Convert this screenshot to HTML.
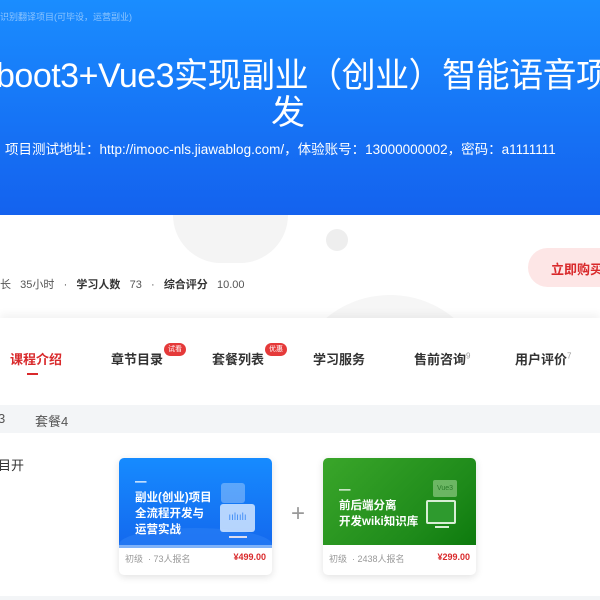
<!DOCTYPE html>
<html><head><meta charset="utf-8"><style>
*{margin:0;padding:0;box-sizing:border-box}
body{width:600px;height:600px;overflow:hidden;position:relative;background:#fff;font-family:"Liberation Sans","Noto Sans CJK SC",sans-serif}
.a{position:absolute;white-space:nowrap}
.hdr{position:absolute;left:0;top:0;width:600px;height:215px;background:linear-gradient(180deg,#1a8dff 0%,#1672f5 60%,#1462ee 100%)}
.card{position:absolute;width:153px;height:117px;border-radius:5px;background:#fff;box-shadow:0 2px 8px rgba(0,0,0,.12);overflow:hidden}
.img{position:absolute;left:0;top:0;width:153px;height:87px}
.ct{position:absolute;left:16px;color:#fff;font-size:11.5px;font-weight:bold;line-height:16px}
.ft{position:absolute;left:6px;top:94px;font-size:9px;color:#999}
.pr{position:absolute;right:6px;top:94px;font-size:9px;color:#d9292b;font-weight:bold}
.tab{position:absolute;top:349px;font-size:13px;font-weight:bold;color:#333}
.badge{position:absolute;background:#e53a3a;color:#fff;font-size:7px;border-radius:7px;padding:1px 4px;line-height:11px}
sup{font-size:8px;color:#999;font-weight:normal}
.clip{position:absolute;left:0;top:215px;width:600px;height:103px;overflow:hidden}
</style></head><body>
<div class="hdr"></div>
<div class="a" style="left:0;top:10px;font-size:9px;color:rgba(255,255,255,.5)">识别翻译项目(可毕设，运营副业)</div>
<div class="a" style="left:-4px;top:56px;font-size:34px;line-height:40px;color:#fff;letter-spacing:-0.5px">boot3+Vue3实现副业（创业）智能语音项</div>
<div class="a" style="left:271px;top:93px;font-size:34px;line-height:40px;color:#fff">发</div>
<div class="a" style="left:5px;top:138px;font-size:13.5px;color:#fff">项目测试地址：http://imooc-nls.jiawablog.com/，体验账号：13000000002，密码：a1111111</div>
<div class="clip">
<div class="a" style="left:173px;top:0;width:115px;height:48px;border-radius:0 0 58px 58px;background:#f4f4f4"></div>
<div class="a" style="left:326px;top:14px;width:22px;height:22px;border-radius:50%;background:#eeeeee"></div>
<div class="a" style="left:290px;top:80px;width:200px;height:200px;border-radius:50%;background:#f6f6f6"></div>
</div>
<div class="a" style="left:0;top:276px;font-size:11px;color:#555">长&nbsp;&nbsp;&nbsp;35小时&nbsp;&nbsp;&nbsp;·&nbsp;&nbsp;&nbsp;<b style="color:#333">学习人数</b>&nbsp;&nbsp;&nbsp;73&nbsp;&nbsp;&nbsp;·&nbsp;&nbsp;&nbsp;<b style="color:#333">综合评分</b>&nbsp;&nbsp;&nbsp;10.00</div>
<div class="a" style="left:528px;top:248px;width:100px;height:39px;border-radius:20px;background:#fde6e6"></div>
<div class="a" style="left:551px;top:259px;font-size:13px;font-weight:bold;color:#d9292b">立即购买</div>
<div class="a" style="left:0;top:318px;width:600px;height:87px;background:#fff;box-shadow:0 -4px 8px rgba(0,0,0,.05)"></div>
<div class="tab" style="left:10px;color:#d9292b">课程介绍</div>
<div class="a" style="left:27px;top:373px;width:11px;height:2px;background:#d9292b"></div>
<div class="tab" style="left:111px">章节目录</div><div class="badge" style="left:164px;top:343px">试看</div>
<div class="tab" style="left:212px">套餐列表</div><div class="badge" style="left:265px;top:343px">优惠</div>
<div class="tab" style="left:313px">学习服务</div>
<div class="tab" style="left:414px">售前咨询<sup>9</sup></div>
<div class="tab" style="left:515px">用户评价<sup>7</sup></div>
<div class="a" style="left:0;top:405px;width:600px;height:28px;background:#f3f5f7"></div>
<div class="a" style="left:-2px;top:411px;font-size:13px;color:#555">3</div>
<div class="a" style="left:35px;top:411px;font-size:13px;color:#555">套餐4</div>
<div class="a" style="left:-2px;top:455px;font-size:13px;color:#333">目开</div>
<div class="card" style="left:119px;top:458px">
<div class="img" style="background:linear-gradient(180deg,#168bff,#1469ee)"></div>
<div class="a" style="left:0;top:70px;width:153px;height:20px;background:#2a7ff5;border-radius:60% 60% 0 0/100% 100% 0 0;opacity:.6"></div>
<div class="ct" style="top:16px">—<br>副业(创业)项目<br>全流程开发与<br>运营实战</div>
<div class="a" style="left:102px;top:25px;width:24px;height:20px;border-radius:3px;background:rgba(255,255,255,.3)"></div>
<div class="a" style="left:101px;top:46px;width:35px;height:28px;border-radius:3px;background:rgba(210,230,255,.85);color:#3f8cf5;font-size:10px;text-align:center;line-height:28px">ıılıılı</div>
<div class="a" style="left:110px;top:78px;width:18px;height:2px;background:#dde"></div>
<div class="ft">初级 &nbsp;· 73人报名</div><div class="pr">¥499.00</div>
</div>
<div class="a" style="left:291px;top:500px;font-size:24px;color:#999">+</div>
<div class="card" style="left:323px;top:458px">
<div class="img" style="background:linear-gradient(135deg,#3aa62a,#1e8a1a 70%,#0d7a0d)"></div>
<div class="ct" style="top:24px">—<br>前后端分离<br>开发wiki知识库</div>
<div class="a" style="left:110px;top:22px;width:24px;height:17px;border-radius:2px;background:rgba(140,200,130,.7);color:#2a7a2a;font-size:7px;text-align:center;line-height:17px">Vue3</div>
<div class="a" style="left:103px;top:42px;width:30px;height:24px;border:2px solid #d8eed5;background:#2e9a2e;border-radius:2px"></div>
<div class="a" style="left:112px;top:68px;width:14px;height:2px;background:#d8eed5"></div>
<div class="ft">初级 &nbsp;· 2438人报名</div><div class="pr">¥299.00</div>
</div>
<div class="a" style="left:0;top:596px;width:600px;height:4px;background:#f3f5f7"></div>
</body></html>
